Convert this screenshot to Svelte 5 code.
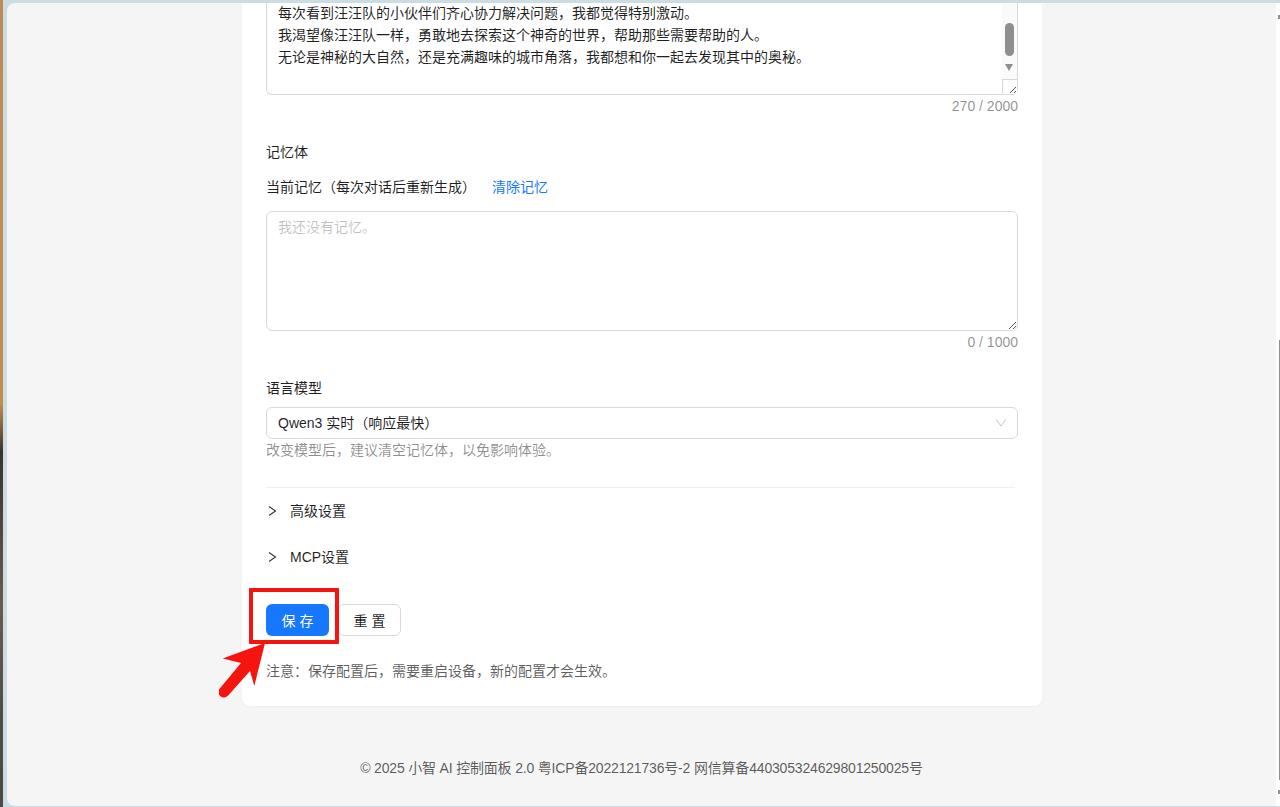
<script>
  const intro = [
    '每次看到汪汪队的小伙伴们齐心协力解决问题，我都觉得特别激动。',
    '我渴望像汪汪队一样，勇敢地去探索这个神奇的世界，帮助那些需要帮助的人。',
    '无论是神秘的大自然，还是充满趣味的城市角落，我都想和你一起去发现其中的奥秘。'
  ];
</script>

<div class="desktop">
  <div class="window">
    <div class="content">
      <div class="card">
        <div class="field-text first">
          <div>
            {#each intro as line}
              <div>{line}</div>
            {/each}
          </div>
          <div class="fake-scroll">
            <span class="thumb"></span>
            <span class="arrow"></span>
            <span class="corner">
              <svg viewBox="0 0 10 10" width="10" height="10"><path d="M9 3L3 9M9 7L7 9" stroke="#555" fill="none" /></svg>
            </span>
          </div>
        </div>
        <div class="count">270 / 2000</div>

        <div class="label memory-title">记忆体</div>
        <div class="memory-row">
          <span>当前记忆（每次对话后重新生成）</span>
          <span class="link">清除记忆</span>
        </div>
        <div class="field-text second">
          <span class="placeholder">我还没有记忆。</span>
          <svg class="grip" viewBox="0 0 10 10" width="10" height="10"><path d="M9 2L2 9M9 6L6 9" stroke="#555" fill="none" /></svg>
        </div>
        <div class="count">0 / 1000</div>

        <div class="label model-title">语言模型</div>
        <div class="select">
          <span>Qwen3 实时（响应最快）</span>
          <svg viewBox="0 0 12 12" width="12" height="12"><path d="M1 2.5L6 9L11 2.5" stroke="#c4c4c4" fill="none" /></svg>
        </div>
        <div class="hint">改变模型后，建议清空记忆体，以免影响体验。</div>

        <div class="divider"></div>
        <div class="collapse">
          <svg viewBox="0 0 12 12" width="12" height="12"><path d="M3 1.5L9.5 6L3 10.5" stroke="#333" fill="none" stroke-width="1.1" /></svg>
          <span>高级设置</span>
        </div>
        <div class="collapse">
          <svg viewBox="0 0 12 12" width="12" height="12"><path d="M3 1.5L9.5 6L3 10.5" stroke="#333" fill="none" stroke-width="1.1" /></svg>
          <span>MCP设置</span>
        </div>

        <div class="actions">
          <button class="primary">保 存</button>
          <button class="ghost">重 置</button>
          <span class="highlight"></span>
          <svg class="pointer" viewBox="0 0 60 70" width="60" height="70">
            <path d="M46 3L3.7 18.5L22 23L0.8 48.4A5.5 5.5 0 0 0 9.2 55.6L31 31L35.3 46Z" fill="#f5140e" />
          </svg>
        </div>
        <div class="note">注意：保存配置后，需要重启设备，新的配置才会生效。</div>
      </div>
      <div class="footer">© 2025 小智 AI 控制面板 2.0 粤ICP备2022121736号-2 网信算备440305324629801250025号</div>
    </div>
    <div class="page-scroll">
      <i class="up"></i>
      <span></span>
      <i class="down"></i>
    </div>
  </div>
</div>

<style>
  :global(body) {
    margin: 0;
  }

  .desktop {
    height: 807px;
    box-sizing: border-box;
    padding: 3px 0 1px 3px;
    background: linear-gradient(180deg, #c08a55 0%, #c58c4c 50%, #3a3230 56%, #6b5a50 75%, #4f4a48 90%, #4a4a4a 100%);
    position: relative;
    overflow: hidden;
    font-family: "Liberation Sans", "Noto Sans CJK SC", sans-serif;
    font-size: 14px;
    color: rgba(0, 0, 0, 0.88);
  }

  .desktop::before {
    content: '';
    position: absolute;
    left: 3px;
    right: 0;
    top: 0;
    bottom: 0;
    background: #c9dde2;
  }

  .window {
    position: relative;
    margin-left: 4px;
    height: 100%;
    display: flex;
    background: #f5f5f5;
    border-radius: 8px 0 0 8px;
    overflow: hidden;
  }

  .content {
    flex: 1;
    display: flex;
    flex-direction: column;
    align-items: center;
    justify-content: flex-end;
    min-width: 0;
    overflow: hidden;
  }

  .card {
    width: 800px;
    flex-shrink: 0;
    box-sizing: border-box;
    padding: 0 24px 24px;
    margin-left: 1px;
    background: #fff;
    border-radius: 0 0 8px 8px;
    box-shadow: 0 1px 2px rgba(0, 0, 0, 0.03);
  }

  .field-text {
    position: relative;
    box-sizing: border-box;
    border: 1px solid #d9d9d9;
    border-radius: 6px;
    line-height: 22px;
  }

  .first {
    height: 116px;
    margin-top: -24px;
    padding: 4px 11px 26px;
    border-top: 0;
    border-radius: 0 0 6px 6px;
    display: flex;
    flex-direction: column;
    justify-content: flex-end;
  }

  .fake-scroll {
    position: absolute;
    top: 0;
    right: 0;
    bottom: 0;
    width: 15px;
    background: #fafafa;
  }

  .thumb {
    position: absolute;
    bottom: 38px;
    left: 3px;
    width: 9px;
    height: 33px;
    border-radius: 5px;
    background: #8f8f8f;
  }

  .arrow {
    position: absolute;
    bottom: 23px;
    left: 3px;
    border-left: 4.5px solid transparent;
    border-right: 4.5px solid transparent;
    border-top: 7px solid #8f8f8f;
  }

  .corner {
    position: absolute;
    right: 0;
    bottom: 0;
    width: 15px;
    height: 15px;
    box-sizing: border-box;
    background: #fff;
    border-top: 1px solid #d9d9d9;
    border-left: 1px solid #d9d9d9;
    display: flex;
    align-items: flex-end;
    justify-content: flex-end;
  }

  .count {
    text-align: right;
    line-height: 22px;
    color: rgba(0, 0, 0, 0.45);
  }

  .label {
    line-height: 22px;
  }

  .memory-title {
    margin-top: 24px;
  }

  .memory-row {
    display: flex;
    gap: 16px;
    margin-top: 13px;
    line-height: 22px;
  }

  .link {
    color: #1677ff;
  }

  .second {
    height: 120px;
    margin-top: 13px;
    padding: 4px 11px;
  }

  .placeholder {
    color: rgba(0, 0, 0, 0.25);
  }

  .grip {
    position: absolute;
    right: 0;
    bottom: 0;
  }

  .model-title {
    margin-top: 24px;
  }

  .select {
    margin-top: 8px;
    height: 32px;
    box-sizing: border-box;
    border: 1px solid #d9d9d9;
    border-radius: 6px;
    padding: 0 10px 2px 11px;
    display: flex;
    align-items: center;
    justify-content: space-between;
  }

  .select svg {
    margin-top: 2px;
  }

  .hint {
    line-height: 22px;
    color: rgba(0, 0, 0, 0.45);
  }

  .divider {
    height: 0;
    margin: 26px 3px 0 0;
    border-top: 1px solid #f0f0f0;
    border-radius: 8px;
  }

  .collapse {
    display: flex;
    align-items: center;
    gap: 12px;
    height: 46px;
    line-height: 22px;
  }

  .collapse svg {
    flex-shrink: 0;
  }

  .actions {
    position: relative;
    display: flex;
    gap: 9px;
    margin-top: 24px;
  }

  button {
    height: 32px;
    width: 63px;
    padding: 0;
    border-radius: 6px;
    font: inherit;
    white-space: nowrap;
  }

  .primary {
    border: 0;
    background: #1677ff;
    color: #fff;
  }

  .ghost {
    border: 1px solid #d9d9d9;
    background: #fff;
    color: rgba(0, 0, 0, 0.88);
  }

  .highlight {
    position: absolute;
    left: -17px;
    top: -16px;
    width: 90px;
    height: 56px;
    box-sizing: border-box;
    border: 4px solid #f5140e;
    border-radius: 1px;
  }

  .pointer {
    position: absolute;
    left: -47px;
    top: 36px;
  }

  .note {
    margin-top: 24px;
    line-height: 22px;
    color: rgba(0, 0, 0, 0.65);
  }

  .footer {
    flex-shrink: 0;
    height: 100px;
    box-sizing: border-box;
    padding-top: 51px;
    line-height: 22px;
    letter-spacing: -0.18px;
    color: rgba(0, 0, 0, 0.65);
  }

  .page-scroll {
    position: relative;
    width: 4px;
    flex-shrink: 0;
    background: #fff;
  }

  .page-scroll span {
    position: absolute;
    top: 337px;
    right: 0;
    width: 1px;
    height: 440px;
    background: #8f8f8f;
  }

  .page-scroll i {
    position: absolute;
    right: 0;
    width: 2px;
    height: 4px;
    background: #8f8f8f;
  }

  .up {
    top: 12px;
  }

  .down {
    bottom: 12px;
  }
</style>
